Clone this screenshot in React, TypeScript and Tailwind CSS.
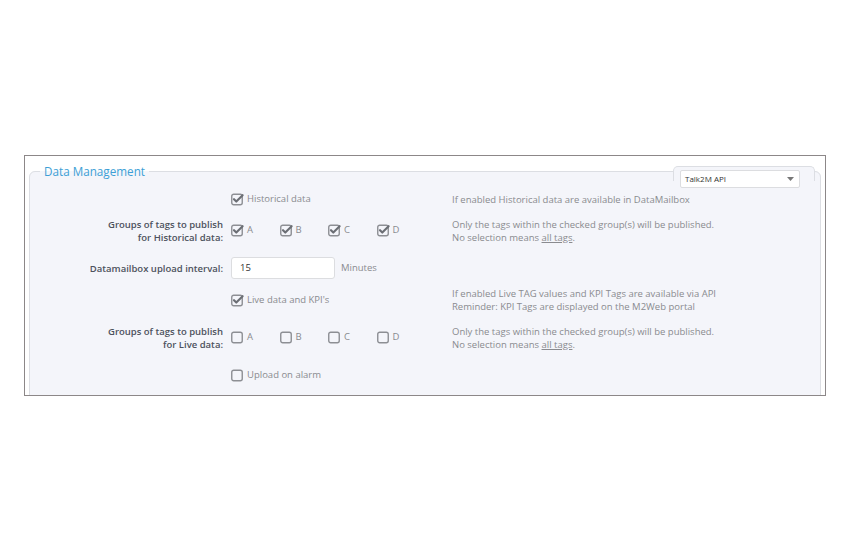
import React from 'react'

const FONT = { fontFamily: '"Open Sans", "Noto Sans", sans-serif' }

function Box({ checked }: { checked: boolean }) {
  return (
    <svg width="13" height="13" viewBox="0 0 13 13" className="flex-shrink-0">
      <rect x="0.75" y="1.25" width="10.5" height="10.5" rx="2" fill="none" stroke="#8d8f94" strokeWidth="1.4" />
      {checked && (
        <path d="M3 6.2 L5.3 8.6 L11.6 2.2" fill="none" stroke="#6b6e74" strokeWidth="2.1" strokeLinecap="round" strokeLinejoin="round" />
      )}
    </svg>
  )
}

function Check({ label, checked }: { label: string; checked: boolean }) {
  return (
    <div className="flex items-center gap-[3px]">
      <Box checked={checked} />
      <span className="text-[9.5px] text-[#8a8b8f]">{label}</span>
    </div>
  )
}

function Groups({ checked }: { checked: boolean }) {
  return (
    <div className="grid grid-cols-4 w-[194px]">
      {['A', 'B', 'C', 'D'].map((g) => (
        <Check key={g} label={g} checked={checked} />
      ))}
    </div>
  )
}

function Row({ h, label, children, help }: { h: string; label?: React.ReactNode; children: React.ReactNode; help?: React.ReactNode }) {
  return (
    <div className={`grid grid-cols-[201px_221px_1fr] items-center ${h}`}>
      <div className="pr-[8px] text-right text-[9.5px] leading-[13px] font-semibold text-[#4d525d]">{label}</div>
      <div>{children}</div>
      <div className="text-[9.5px] leading-[13px] text-[#8a8b8f]">{help}</div>
    </div>
  )
}

const NoSel = (
  <>
    Only the tags within the checked group(s) will be published.
    <br />
    No selection means <span className="underline">all tags</span>.
  </>
)

export default function App() {
  return (
    <div className="w-[850px] h-[552px] bg-white pt-[155px] pl-[24px]" style={FONT}>
      <div className="w-[802px] h-[241px] border border-[#8c8788] bg-white overflow-hidden pt-[7px] px-[4px]">
        <fieldset className="relative h-[300px] border border-[#dcdee3] rounded-tl-[6px] rounded-tr-[6px] bg-[#f4f5fa] pt-[7px]">
          <legend className="ml-[10px] px-[4px] text-[11.7px] leading-[16px] text-[#3d9fd6]">Data Management</legend>

          {/* select tab */}
          <div className="absolute top-[-13px] right-[5px] w-[142px] h-[15px] border-t border-l border-r border-[#dcdee3] rounded-t-[5px] bg-[#f4f5fa] pl-[6px] pt-[3px]">
            <div className="w-[120px] h-[18px] bg-white border border-[#dcdde0] rounded-[2px] flex items-center justify-between pl-[4px] pr-[5px]">
              <span className="text-[8px] text-[#333]">Talk2M API</span>
              <svg width="7" height="4" viewBox="0 0 7 4">
                <path d="M0 0 L7 0 L3.5 4 Z" fill="#777" />
              </svg>
            </div>
          </div>

          <Row h="h-[26px]" help="If enabled Historical data are available in DataMailbox">
            <Check label="Historical data" checked />
          </Row>
          <Row
            h="h-[37px]"
            label={<>Groups of tags to publish<br />for Historical data:</>}
            help={NoSel}
          >
            <Groups checked />
          </Row>
          <Row h="h-[38px]" label="Datamailbox upload interval:">
            <div className="flex items-center gap-[6px]">
              <div className="w-[104px] h-[22px] bg-white border border-[#dcdde0] rounded-[3px] flex items-center pl-[8px] text-[9.5px] text-[#333]">15</div>
              <span className="text-[9.5px] text-[#8a8b8f]">Minutes</span>
            </div>
          </Row>
          <Row
            h="h-[25px]"
            help={<>If enabled Live TAG values and KPI Tags are available via API<br />Reminder: KPI Tags are displayed on the M2Web portal</>}
          >
            <Check label="Live data and KPI's" checked />
          </Row>
          <Row
            h="h-[51px]"
            label={<>Groups of tags to publish<br />for Live data:</>}
            help={NoSel}
          >
            <Groups checked={false} />
          </Row>
          <Row h="h-[24px]">
            <Check label="Upload on alarm" checked={false} />
          </Row>
        </fieldset>
      </div>
    </div>
  )
}
